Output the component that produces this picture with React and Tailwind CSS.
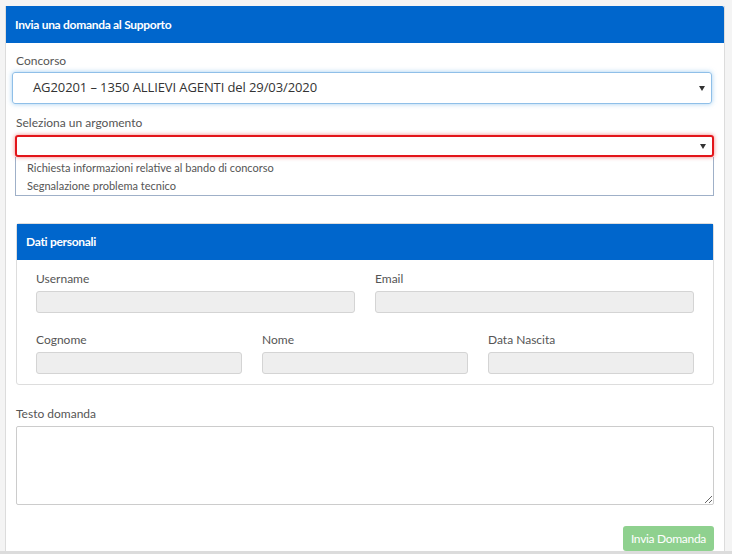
const labelCls = "block text-[12px] leading-4 text-[#555]";
const inputCls =
  "h-[22px] w-full rounded-[3px] border border-[#d4d4d4] bg-[#eeeeee]";

function Arrow() {
  return (
    <svg width="6" height="6" viewBox="0 0 6 6" className="absolute right-[6px] top-1/2 -translate-y-1/2">
      <path d="M0 1 L6 1 L3 6 Z" fill="#333" />
    </svg>
  );
}

function Field({ label, className }) {
  return (
    <div className={className}>
      <span className={labelCls}>{label}</span>
      <div className={`mt-[4px] ${inputCls}`} />
    </div>
  );
}

export default function App() {
  return (
    <div
      className="flex h-[554px] w-[732px] flex-col overflow-hidden bg-[#f4f4f4]"
      style={{ fontFamily: "Lato, 'Open Sans', sans-serif" }}
    >
      <div className="flex flex-1 pl-[5px] pt-[6px]">
        <div className="w-[720px] border-x border-[#dcdcdc] bg-white">
          <div className="flex h-[37px] items-center rounded-tr-[2px] bg-[#0066cc] px-[9px]">
            <h1 className="text-[12px] font-bold tracking-[-0.3px] text-white">
              Invia una domanda al Supporto
            </h1>
          </div>

          <div className="px-[10px] pt-[10px]">
            <span className={labelCls}>Concorso</span>
            <div className="relative ml-[-4px] mr-[2px] mt-[3px] flex h-[32px] items-center rounded-[3px] border border-[#8fbfe8] pl-[20px] shadow-[0_0_5px_rgba(102,175,233,0.6)]">
              <span
                className="text-[13px] tracking-[-0.1px] text-[#333]"
                style={{ fontFamily: "'Open Sans', sans-serif" }}
              >
                AG20201 – 1350 ALLIEVI AGENTI del 29/03/2020
              </span>
              <Arrow />
            </div>

            <span className={`${labelCls} mt-[11px]`}>Seleziona un argomento</span>
            <div className="ml-[-1px] mt-[4px]">
              <div className="relative h-[22px] rounded-[3px] border-2 border-[#e3151a] shadow-[0_0_4px_rgba(230,0,0,0.5)]">
                <Arrow />
              </div>
              <div className="border border-t-0 border-[#9fb0c8] px-[11px] pt-[2px] text-[11px] leading-[18px] text-[#555]">
                <div>Richiesta informazioni relative al bando di concorso</div>
                <div>Segnalazione problema tecnico</div>
              </div>
            </div>

            <div className="mt-[27px] rounded-[3px] border border-[#dddddd]">
              <div className="flex h-[36px] items-center bg-[#0066cc] px-[9px]">
                <h2 className="text-[12px] font-bold tracking-[-0.3px] text-white">
                  Dati personali
                </h2>
              </div>
              <div className="px-[19px] pb-[10px] pt-[11px]">
                <div className="grid grid-cols-2 gap-x-[20px]">
                  <Field label="Username" />
                  <Field label="Email" />
                </div>
                <div className="mt-[19px] grid grid-cols-3 gap-x-[20px]">
                  <Field label="Cognome" />
                  <Field label="Nome" />
                  <Field label="Data Nascita" />
                </div>
              </div>
            </div>

            <span className={`${labelCls} mt-[21px]`}>Testo domanda</span>
            <textarea
              readOnly
              className="mt-[4px] block h-[79px] w-full rounded-[2px] border border-[#cccccc] bg-white outline-none"
            />

            <div className="mt-[21px] flex justify-end">
              <button className="h-[25px] rounded-[3px] bg-[#8fd18f] px-[8px] text-[12px] tracking-[-0.3px] text-white">
                Invia Domanda
              </button>
            </div>
          </div>
        </div>
      </div>
      <div className="h-[3px] bg-[#dcdcdc]" />
    </div>
  );
}
